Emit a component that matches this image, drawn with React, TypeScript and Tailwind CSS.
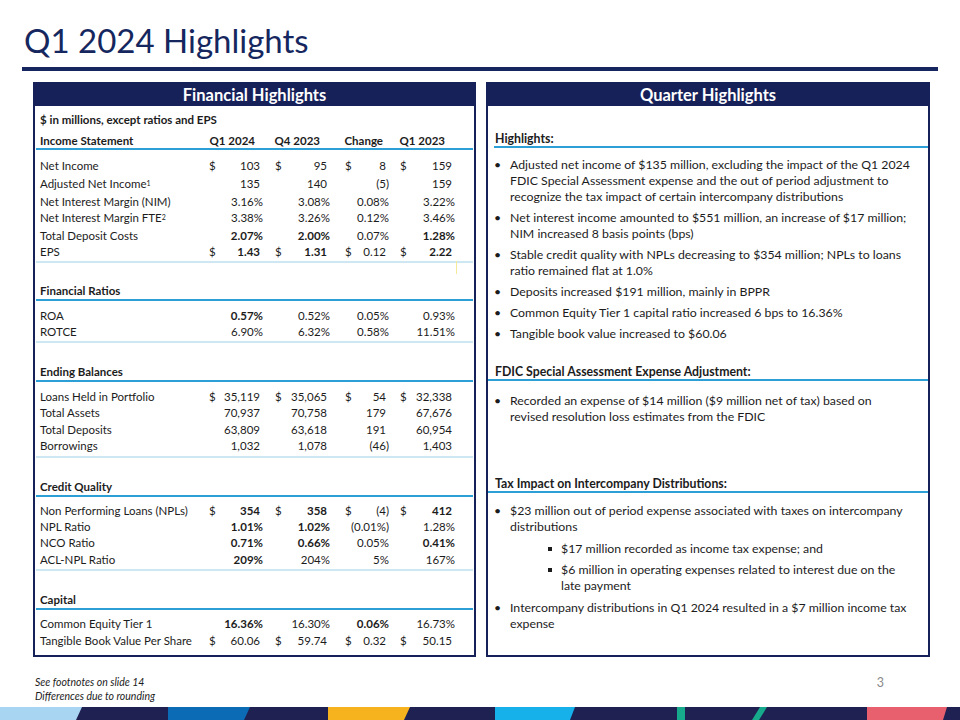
import React from "react";

type Cell = { v: string; b?: boolean; d?: boolean };
type Row = { label: React.ReactNode; cells: Cell[]; h?: string };
type Section = { title: string; rows: Row[]; top: string; rowsPt: string; rowH: string; last?: boolean };

const c = (v: string, b = false, d = false): Cell => ({ v, b, d });

const sections: Section[] = [
  {
    title: "Financial Ratios",
    top: "mt-[20px]",
    rowsPt: "pt-[6px]",
    rowH: "h-[16px]",
    rows: [
      { label: "ROA", cells: [c("0.57%", true), c("0.52%"), c("0.05%"), c("0.93%")] },
      { label: "ROTCE", cells: [c("6.90%"), c("6.32%"), c("0.58%"), c("11.51%")] },
    ],
  },
  {
    title: "Ending Balances",
    top: "mt-[21px]",
    rowsPt: "pt-[6px]",
    rowH: "h-[16.4px]",
    rows: [
      { label: "Loans Held in Portfolio", cells: [c("35,119", false, true), c("35,065", false, true), c("54", false, true), c("32,338", false, true)] },
      { label: "Total Assets", cells: [c("70,937"), c("70,758"), c("179"), c("67,676")] },
      { label: "Total Deposits", cells: [c("63,809"), c("63,618"), c("191"), c("60,954")] },
      { label: "Borrowings", cells: [c("1,032"), c("1,078"), c("(46)"), c("1,403")] },
    ],
  },
  {
    title: "Credit Quality",
    top: "mt-[21px]",
    rowsPt: "pt-[5px]",
    rowH: "h-[16.4px]",
    rows: [
      { label: "Non Performing Loans (NPLs)", cells: [c("354", true, true), c("358", true, true), c("(4)", false, true), c("412", true, true)] },
      { label: "NPL Ratio", cells: [c("1.01%", true), c("1.02%", true), c("(0.01%)"), c("1.28%")] },
      { label: "NCO Ratio", cells: [c("0.71%", true), c("0.66%", true), c("0.05%"), c("0.41%", true)] },
      { label: "ACL-NPL Ratio", cells: [c("209%", true), c("204%"), c("5%"), c("167%")] },
    ],
  },
  {
    title: "Capital",
    top: "mt-[21px]",
    rowsPt: "pt-[5px]",
    rowH: "h-[17px]",
    last: true,
    rows: [
      { label: "Common Equity Tier 1", cells: [c("16.36%", true), c("16.30%"), c("0.06%", true), c("16.73%")] },
      { label: "Tangible Book Value Per Share", cells: [c("60.06", false, true), c("59.74", false, true), c("0.32", false, true), c("50.15", false, true)] },
    ],
  },
];

const incomeRows: Row[] = [
  { label: "Net Income", h: "h-[17px]", cells: [c("103", false, true), c("95", false, true), c("8", false, true), c("159", false, true)] },
  {
    label: (
      <>
        Adjusted Net Income<sup className="text-[7px] relative -top-[2px]">1</sup>
      </>
    ),
    h: "h-[19px]",
    cells: [c("135"), c("140"), c("(5)"), c("159")],
  },
  { label: "Net Interest Margin (NIM)", h: "h-[16px]", cells: [c("3.16%"), c("3.08%"), c("0.08%"), c("3.22%")] },
  {
    label: (
      <>
        Net Interest Margin FTE<sup className="text-[7px] relative -top-[2px]">2</sup>
      </>
    ),
    h: "h-[18px]",
    cells: [c("3.38%"), c("3.26%"), c("0.12%"), c("3.46%")],
  },
  { label: "Total Deposit Costs", h: "h-[16px]", cells: [c("2.07%", true), c("2.00%", true), c("0.07%"), c("1.28%", true)] },
  { label: "EPS", h: "h-[17px]", cells: [c("1.43", true, true), c("1.31", true, true), c("0.12", false, true), c("2.22", true, true)] },
];

const colPl = ["pl-[4px]", "pl-[12px]", "pl-[15px]", "pl-[11px]"];
const hdrPr = ["pr-[8px]", "pr-[10px]", "pr-[6px]", "pr-[10px]"];
const GRID = "grid grid-cols-[165px_58px_67px_59px_66px] ml-[5px]";

function ValueCell({ cell, i }: { cell: Cell; i: number }) {
  const tight = cell.v.endsWith("%") || cell.v.endsWith(")");
  return (
    <div className={`flex justify-between items-center ${colPl[i]}`}>
      <span>{cell.d ? "$" : ""}</span>
      <span className={`${cell.b ? "font-bold" : ""} ${tight ? "" : "pr-[3px]"}`}>{cell.v}</span>
    </div>
  );
}

function DataRow({ row, h }: { row: Row; h?: string }) {
  return (
    <div className={`${GRID} ${row.h ?? h ?? "h-[16px]"} items-center`}>
      <div className="whitespace-nowrap">{row.label}</div>
      {row.cells.map((cell, i) => (
        <ValueCell key={i} cell={cell} i={i} />
      ))}
    </div>
  );
}

function BlueLine() {
  return <div className="h-[2px] bg-[#2c9fd6] mx-[1px]" />;
}
function PaleLine() {
  return <div className="h-[2px] bg-[#cde7f3] mx-[1px]" />;
}

function FinancialPanel() {
  return (
    <div className="w-[443px] h-[575px] border-2 border-[#16215a] flex flex-col">
      <div className="h-[22px] bg-[#16215a] text-white font-bold text-[16.5px] leading-[22px] text-center">
        Financial Highlights
      </div>
      <div className="flex flex-col text-[11.5px] text-[#1c1c1c]">
        <div className="h-[16px] mt-[6px] leading-[16px] font-bold ml-[5px]">$ in millions, except ratios and EPS</div>
        <div className={`${GRID} h-[16px] mt-[4px] items-center font-bold`}>
          <div>Income Statement</div>
          {["Q1 2024", "Q4 2023", "Change", "Q1 2023"].map((h, i) => (
            <div key={h} className={`text-right ${hdrPr[i]}`}>
              {h}
            </div>
          ))}
        </div>
        <BlueLine />
        <div className="pt-[7px] pb-[1px] flex flex-col">
          {incomeRows.map((r, i) => (
            <DataRow key={i} row={r} />
          ))}
        </div>
        <div className="relative">
          <PaleLine />
          <div className="absolute left-[421px] top-0 w-[1px] h-[13px] bg-[#f3eb9a]" />
        </div>
        {sections.map((s) => (
          <div key={s.title} className={`flex flex-col ${s.top}`}>
            <div className="h-[16px] leading-[16px] font-bold ml-[5px]">{s.title}</div>
            <BlueLine />
            <div className={`${s.rowsPt} pb-[2px] flex flex-col`}>
              {s.rows.map((r, i) => (
                <DataRow key={i} row={r} h={s.rowH} />
              ))}
            </div>
            {!s.last && <PaleLine />}
          </div>
        ))}
      </div>
    </div>
  );
}

function Bullet({ children, sub }: { children: React.ReactNode; sub?: boolean }) {
  if (sub) {
    return (
      <div className="flex pl-[60px]">
        <span className="w-[13px] shrink-0 flex items-start pt-[6px]">
          <span className="block w-[4px] h-[4px] bg-[#1c1c1c]" />
        </span>
        <div>{children}</div>
      </div>
    );
  }
  return (
    <div className="flex pl-[6px]">
      <span className="w-[16px] shrink-0">•</span>
      <div>{children}</div>
    </div>
  );
}

function QuarterPanel() {
  return (
    <div className="w-[444px] h-[575px] border-2 border-[#16215a] flex flex-col">
      <div className="h-[22px] bg-[#16215a] text-white font-bold text-[16.5px] leading-[22px] text-center">
        Quarter Highlights
      </div>
      <div className="flex flex-col text-[12.3px] leading-[16px] text-[#1c1c1c]">
        <div className="h-[15px] mt-[25px] leading-[15px] font-bold ml-[7px]">Highlights:</div>
        <div className="h-[2px] bg-[#2c9fd6] ml-[6px]" />
        <div className="flex flex-col gap-[5px] mt-[9px]">
          <Bullet>
            Adjusted net income of $135 million, excluding the impact of the Q1 2024
            <br />
            FDIC Special Assessment expense and the out of period adjustment to
            <br />
            recognize the tax impact of certain intercompany distributions
          </Bullet>
          <Bullet>
            Net interest income amounted to $551 million, an increase of $17 million;
            <br />
            NIM increased 8 basis points (bps)
          </Bullet>
          <Bullet>
            Stable credit quality with NPLs decreasing to $354 million; NPLs to loans
            <br />
            ratio remained flat at 1.0%
          </Bullet>
          <Bullet>Deposits increased $191 million, mainly in BPPR</Bullet>
          <Bullet>Common Equity Tier 1 capital ratio increased 6 bps to 16.36%</Bullet>
          <Bullet>Tangible book value increased to $60.06</Bullet>
        </div>
        <div className="h-[15px] mt-[22px] leading-[15px] font-bold ml-[7px]">
          FDIC Special Assessment Expense Adjustment:
        </div>
        <div className="h-[2px] bg-[#2c9fd6]" />
        <div className="flex flex-col mt-[12px]">
          <Bullet>
            Recorded an expense of $14 million ($9 million net of tax) based on
            <br />
            revised resolution loss estimates from the FDIC
          </Bullet>
        </div>
        <div className="h-[15px] mt-[51px] leading-[15px] font-bold ml-[7px]">
          Tax Impact on Intercompany Distributions:
        </div>
        <div className="h-[2px] bg-[#2c9fd6]" />
        <div className="flex flex-col gap-[5.5px] mt-[10px]">
          <Bullet>
            $23 million out of period expense associated with taxes on intercompany
            <br />
            distributions
          </Bullet>
          <Bullet sub>$17 million recorded as income tax expense; and</Bullet>
          <Bullet sub>
            $6 million in operating expenses related to interest due on the
            <br />
            late payment
          </Bullet>
          <Bullet>
            Intercompany distributions in Q1 2024 resulted in a $7 million income tax
            <br />
            expense
          </Bullet>
        </div>
      </div>
    </div>
  );
}

function Strip() {
  return (
    <svg width="960" height="13" viewBox="0 0 960 13" className="block">
      <rect x="0" y="0" width="960" height="13" fill="#1f2152" />
      <polygon points="0,0 82,0 76,13 0,13" fill="#a8d5f1" />
      <polygon points="168,0 250,0 244,13 168,13" fill="#0b6cb5" />
      <polygon points="328,0 410,0 404,13 328,13" fill="#f6b31d" />
      <polygon points="495,0 575,0 570,13 495,13" fill="#16b1ea" />
      <rect x="677" y="0" width="8" height="13" fill="#17a98b" />
      <polygon points="760,0 767,0 759,13 752,13" fill="#17a98b" />
      <polygon points="867,0 947,0 943,13 867,13" fill="#e8606d" />
    </svg>
  );
}

export default function App() {
  return (
    <div className="w-[960px] h-[720px] bg-white flex flex-col overflow-hidden font-['Lato',sans-serif]">
      <div className="h-[67px] pl-[24px] pt-[20px] text-[33px] leading-[40px] text-[#15275e]">Q1 2024 Highlights</div>
      <div className="h-[4px] mx-[22px] bg-[#15275e]" />
      <div className="flex gap-[10px] pl-[33px] mt-[11px]">
        <FinancialPanel />
        <QuarterPanel />
      </div>
      <div className="flex justify-between pl-[35px] pr-[76px] mt-[18px] h-[32px]">
        <div className="italic text-[10.5px] leading-[14px] text-[#1c1c1c]">
          <div>See footnotes on slide 14</div>
          <div>Differences due to rounding</div>
        </div>
        <div className="text-[12.5px] text-[#8a8a8a] leading-[14px] pt-[1px]">3</div>
      </div>
      <Strip />
    </div>
  );
}
